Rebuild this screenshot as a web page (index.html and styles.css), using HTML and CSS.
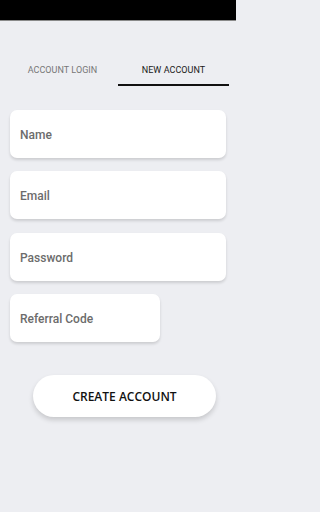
FILE: index.html
```html
<!DOCTYPE html>
<html>
<head>
<meta charset="utf-8">
<link rel="stylesheet" href="styles.css">
</head>
<body>
<div class="status"></div>
<div class="tabs">
  <div class="tab">ACCOUNT LOGIN</div>
  <div class="tab active">NEW ACCOUNT</div>
</div>
<form class="form">
  <div class="field">Name</div>
  <div class="field">Email</div>
  <div class="field third">Password</div>
  <div class="field short">Referral Code</div>
  <button type="button" class="btn">CREATE ACCOUNT</button>
</form>
</body>
</html>
```
FILE: styles.css
```css
html, body { margin: 0; padding: 0; }
body {
  width: 236px;
  height: 512px;
  background: #edeef2;
  font-family: Roboto, "Noto Sans", sans-serif;
  overflow: hidden;
}
.status {
  height: 20px;
  background: #000;
  border-bottom: 1px solid #8a8a8a;
}
.tabs {
  display: flex;
  margin: 34px 7px 0 7px;
}
.tab {
  flex: 1;
  height: 29px;
  border-bottom: 2px solid transparent;
  display: flex;
  align-items: center;
  justify-content: center;
  font-size: 9px;
  color: #777;
  letter-spacing: 0.05px;
}
.tab.active {
  color: #1a1a1a;
  border-bottom-color: #111;
}
.form {
  display: flex;
  flex-direction: column;
  align-items: flex-start;
  padding: 24px 10px 0 10px;
  gap: 13px;
}
.field {
  box-sizing: border-box;
  width: 216px;
  height: 48px;
  background: #fff;
  border-radius: 7px;
  box-shadow: 0 2px 3px rgba(0,0,0,0.14);
  display: flex;
  align-items: center;
  padding: 2px 0 0 10px;
  font-size: 12px;
  font-weight: 500;
  color: #6c6c6c;
}
.field.third { margin-top: 1px; }
.field.short { width: 150px; }
.btn {
  margin: 20px 0 0 23px;
  width: 183px;
  height: 42px;
  border: none;
  border-radius: 21px;
  background: #fff;
  box-shadow: 0 3px 5px rgba(0,0,0,0.16);
  font-family: "Open Sans", sans-serif;
  font-weight: 600;
  font-size: 12px;
  color: #111;
  padding: 1px 0 0 0;
}
```
